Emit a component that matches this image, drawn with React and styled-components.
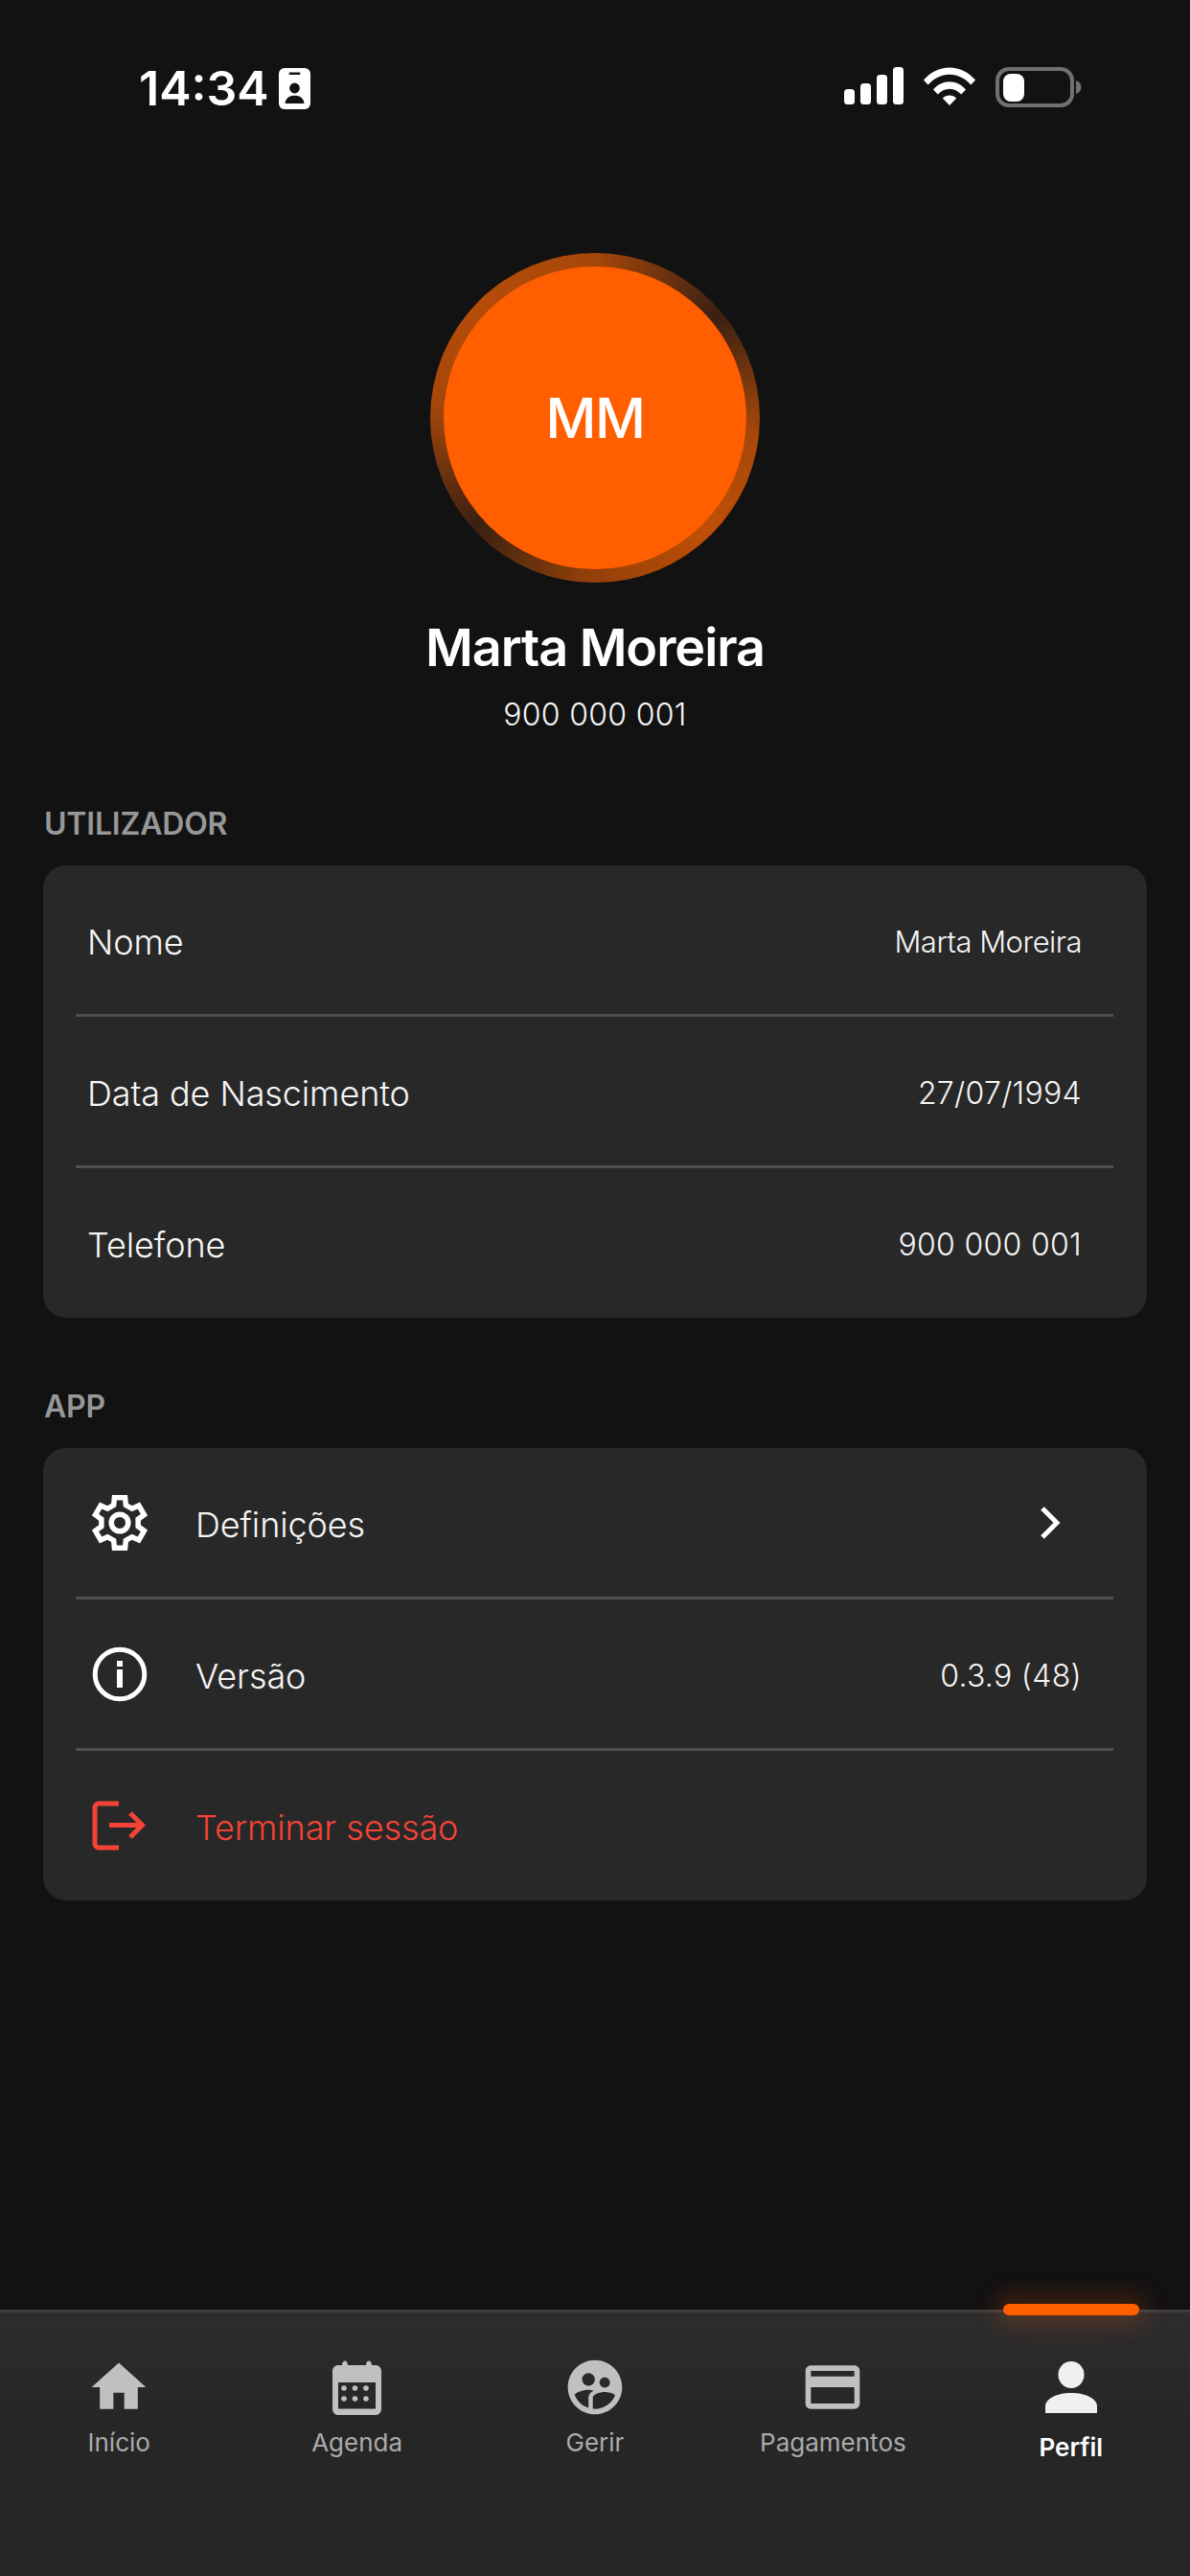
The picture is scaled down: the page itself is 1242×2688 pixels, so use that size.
import React from 'react';
import styled, { createGlobalStyle } from 'styled-components';
import { MdHome, MdSupervisedUserCircle, MdCreditCard } from 'react-icons/md';

const GlobalStyle = createGlobalStyle`
  html, body {
    margin: 0;
    padding: 0;
    background: #121212;
  }
  * {
    box-sizing: border-box;
  }
`;

const Page = styled.div`
  width: 1242px;
  height: 2688px;
  display: flex;
  flex-direction: column;
  background: #121212;
  color: #fff;
  font-family: Inter, "Liberation Sans", sans-serif;
  overflow: hidden;
`;

const StatusBar = styled.div`
  height: 264px;
  padding: 70px 113px 0 145px;
  display: flex;
  align-items: flex-start;
  justify-content: space-between;
`;

const StatusLeft = styled.div`
  display: flex;
  align-items: center;
  gap: 10px;
  height: 44px;
`;

const Clock = styled.span`
  font-size: 50px;
  font-weight: 600;
  line-height: 44px;
`;

const StatusRight = styled.div`
  display: flex;
  align-items: flex-start;
  gap: 21px;
`;

const Profile = styled.div`
  display: flex;
  flex-direction: column;
  align-items: center;
`;

const AvatarRing = styled.div`
  width: 344px;
  height: 344px;
  padding: 14px;
  border-radius: 50%;
  background: conic-gradient(#a5470a 0deg, #3a2012 50deg, #a5470a 95deg, #c04f06 135deg, #8e3e0a 185deg, #3a2012 228deg, #a5470a 275deg, #b54c08 315deg, #a5470a 360deg);
`;

const Avatar = styled.div`
  width: 100%;
  height: 100%;
  border-radius: 50%;
  background: #ff5f00;
  display: flex;
  align-items: center;
  justify-content: center;
  font-size: 58px;
  font-weight: 500;
  letter-spacing: -1.5px;
`;

const Name = styled.div`
  margin-top: 36px;
  font-size: 54px;
  line-height: 64px;
  font-weight: 600;
  letter-spacing: -1.1px;
`;

const Phone = styled.div`
  margin-top: 18px;
  font-size: 32px;
  line-height: 40px;
  font-weight: 300;
  letter-spacing: 0.3px;
  color: #f5f5f5;
`;

const Section = styled.section`
  padding: 0 45px;
  margin-top: ${(p) => p.$top}px;
`;

const SectionTitle = styled.h2`
  margin: 0 0 25px 1px;
  font-size: 32px;
  line-height: 36px;
  font-weight: 600;
  letter-spacing: -0.2px;
  color: #979797;
`;

const Card = styled.div`
  background: #282828;
  border-radius: 24px;
  padding-bottom: 1px;
`;

const Row = styled.div`
  height: 155px;
  padding: 0 68px 0 ${(p) => (p.$icon ? 51 : 46)}px;
  display: flex;
  align-items: center;
`;

const RowIcon = styled.span`
  width: 58px;
  margin-right: 50px;
  display: flex;
  align-items: center;
  justify-content: center;
  color: ${(p) => p.$color || '#fff'};
`;

const Label = styled.span`
  flex: 1;
  padding-top: 4px;
  font-size: 36px;
  font-weight: 300;
  letter-spacing: -0.1px;
  color: ${(p) => p.$color || '#f5f5f5'};
`;

const Value = styled.span`
  padding-top: 3px;
  font-size: ${(p) => (p.$tight ? 31 : 32)}px;
  font-weight: 300;
  letter-spacing: ${(p) => (p.$tight ? -0.5 : 0.3)}px;
  color: #f5f5f5;
`;

const ChevronSlot = styled.span`
  display: flex;
  margin-right: 21px;
`;

const Divider = styled.div`
  height: 3px;
  margin: 0 35px 0 34px;
  background: #4f4f4f;
`;

const TabBar = styled.nav`
  position: relative;
  margin-top: auto;
  height: 278px;
  border-top: 3px solid #3f3f3f;
  background: linear-gradient(#2d2d2d, #262626 40%);
  display: grid;
  grid-template-columns: repeat(5, 1fr);
  padding-top: 44px;
`;

const Indicator = styled.div`
  position: absolute;
  top: -9px;
  left: 1047px;
  width: 142px;
  height: 12px;
  border-radius: 6px;
  background: #ff5f00;
  box-shadow: 0 0 26px 8px rgba(255, 95, 0, 0.22);
`;

const Tab = styled.div`
  display: flex;
  flex-direction: column;
  align-items: center;
  color: ${(p) => (p.$active ? '#f0f0f0' : '#c0c0c0')};
`;

const TabIcon = styled.div`
  width: 68px;
  height: 68px;
  display: flex;
  align-items: center;
  justify-content: center;
`;

const TabLabel = styled.span`
  margin-top: ${(p) => (p.$active ? 12 : 7)}px;
  font-size: 26px;
  line-height: 34px;
  font-weight: ${(p) => (p.$active ? 600 : 400)};
  color: ${(p) => (p.$active ? '#fff' : '#ababab')};
`;

const IdBadge = () => (
  <svg width="33" height="43" viewBox="0 0 33 43">
    <rect width="33" height="43" rx="6" fill="#fff" />
    <rect x="10.5" y="4.5" width="12" height="2.6" rx="1.3" fill="#121212" />
    <circle cx="16.5" cy="21" r="5.4" fill="#121212" />
    <path d="M6.5 37c.6-5.6 4.6-8.2 10-8.2s9.400 2.600 10 8.200z" fill="#121212" />
  </svg>
);

const Signal = () => (
  <svg width="62" height="40" viewBox="0 0 62 40">
    <rect x="0" y="23" width="11" height="16" rx="3.5" fill="#fff" />
    <rect x="17" y="17" width="11" height="22" rx="3.5" fill="#fff" />
    <rect x="34" y="8" width="11" height="31" rx="3.5" fill="#fff" />
    <rect x="51" y="0" width="11" height="39" rx="3.5" fill="#fff" />
  </svg>
);

const Wifi = () => (
  <svg width="54" height="40" viewBox="0 0 54 40">
    <path d="M0 13.5C7 5.5 16.5 0.5 27 0.5s20 5 27 13l-4.6 5C43.5 12 35.8 7.800 27 7.800S10.500 12 4.600 18.500z" fill="#fff" />
    <path d="M10 23.500C14.400 18.400 20.400 15.300 27 15.300s12.600 3.100 17 8.200l-4.800 5C36 24.900 31.800 22.700 27 22.700s-9 2.200-12.200 5.800z" fill="#fff" />
    <path d="M19.800 32.500C21.700 30.500 24.200 29.400 27 29.400s5.300 1.100 7.200 3.100L27 40z" fill="#fff" />
  </svg>
);

const Battery = () => (
  <svg width="90" height="42" viewBox="0 0 90 42">
    <rect x="2" y="2" width="78" height="38" rx="12" fill="none" stroke="#707070" strokeWidth="4" />
    <rect x="8" y="7" width="22" height="29" rx="8" fill="#fff" />
    <path d="M84 14c3.500 1 5.500 3.700 5.500 7s-2 6-5.500 7z" fill="#707070" />
  </svg>
);

// six teeth, one pointing straight up
const gearPoints = () => {
  const pts = [];
  for (let i = 0; i < 6; i++) {
    const a = i * 60 - 90;
    [[-19, 19.5], [-12, 26.8], [12, 26.8], [19, 19.5]].forEach(([off, r]) => {
      const t = ((a + off) * Math.PI) / 180;
      pts.push(`${(29 + r * Math.cos(t)).toFixed(2)},${(30 + r * Math.sin(t)).toFixed(2)}`);
    });
  }
  return pts.join(' ');
};

const GearIcon = () => (
  <svg width="58" height="60" viewBox="0 0 58 60" fill="none" stroke="currentColor" strokeWidth="5.500" strokeLinejoin="miter">
    <polygon points={gearPoints()} />
    <circle cx="29" cy="30" r="8.800" strokeWidth="5.500" />
  </svg>
);

const InfoIcon = () => (
  <svg width="58" height="58" viewBox="0 0 58 58" fill="none">
    <circle cx="29" cy="29" r="25.800" stroke="currentColor" strokeWidth="5" />
    <rect x="26" y="15" width="6" height="6" fill="currentColor" />
    <rect x="26" y="24" width="6" height="19" fill="currentColor" />
  </svg>
);

const LogoutIcon = () => (
  <svg width="58" height="52" viewBox="0 0 58 52" fill="none" stroke="currentColor" strokeWidth="5">
    <path d="M28 3H7a4 4 0 0 0-4 4v38a4 4 0 0 0 4 4h21" />
    <path d="M18 25.500h33" />
    <path d="M40 13l12.500 12.500L40 38" />
  </svg>
);

const Chevron = () => (
  <svg width="24" height="36" viewBox="0 0 24 36" fill="none" stroke="#fff" strokeWidth="5">
    <path d="M4 3l15 15L4 33" />
  </svg>
);

const CalendarIcon = () => (
  <svg width="51" height="57" viewBox="0 0 51 57" fill="currentColor">
    <path fillRule="evenodd" d="M6 5h4c0-6 6-6 6 0h19c0-6 6-6 6 0h4c3.300 0 6 2.700 6 6v40c0 3.300-2.700 6-6 6H6c-3.300 0-6-2.700-6-6V11c0-3.300 2.700-6 6-6zm0 18v27.500h39V23z" />
    {[12, 23.500, 35].map((x) =>
      [29, 40].map((y) => <circle key={`${x}-${y}`} cx={x} cy={y} r="2.800" />)
    )}
  </svg>
);

const PersonIcon = () => (
  <svg width="54" height="54" viewBox="0 0 54 54" fill="currentColor">
    <ellipse cx="27" cy="14" rx="13.500" ry="14" />
    <path d="M0 54V47C0 39 12 33 27 33s27 6 27 14v7z" />
  </svg>
);

const tabs = [
  { label: 'Início', icon: <MdHome size={68} /> },
  { label: 'Agenda', icon: <CalendarIcon /> },
  { label: 'Gerir', icon: <MdSupervisedUserCircle size={68} /> },
  { label: 'Pagamentos', icon: <MdCreditCard size={68} /> },
  { label: 'Perfil', icon: <PersonIcon />, active: true },
];

export default function App() {
  return (
    <Page>
      <GlobalStyle />
      <StatusBar>
        <StatusLeft>
          <Clock>14:34</Clock>
          <IdBadge />
        </StatusLeft>
        <StatusRight>
          <Signal />
          <Wifi />
          <Battery />
        </StatusRight>
      </StatusBar>

      <Profile>
        <AvatarRing>
          <Avatar>MM</Avatar>
        </AvatarRing>
        <Name>Marta Moreira</Name>
        <Phone>900 000 001</Phone>
      </Profile>

      <Section $top={76}>
        <SectionTitle>UTILIZADOR</SectionTitle>
        <Card>
          <Row>
            <Label>Nome</Label>
            <Value $tight>Marta Moreira</Value>
          </Row>
          <Divider />
          <Row>
            <Label>Data de Nascimento</Label>
            <Value>27/07/1994</Value>
          </Row>
          <Divider />
          <Row>
            <Label>Telefone</Label>
            <Value>900 000 001</Value>
          </Row>
        </Card>
      </Section>

      <Section $top={75}>
        <SectionTitle>APP</SectionTitle>
        <Card>
          <Row $icon>
            <RowIcon><GearIcon /></RowIcon>
            <Label>Definições</Label>
            <ChevronSlot><Chevron /></ChevronSlot>
          </Row>
          <Divider />
          <Row $icon>
            <RowIcon><InfoIcon /></RowIcon>
            <Label>Versão</Label>
            <Value>0.3.9 (48)</Value>
          </Row>
          <Divider />
          <Row $icon>
            <RowIcon $color="#f44336"><LogoutIcon /></RowIcon>
            <Label $color="#f44336">Terminar sessão</Label>
          </Row>
        </Card>
      </Section>

      <TabBar>
        <Indicator />
        {tabs.map((tab) => (
          <Tab key={tab.label} $active={tab.active}>
            <TabIcon>{tab.icon}</TabIcon>
            <TabLabel $active={tab.active}>{tab.label}</TabLabel>
          </Tab>
        ))}
      </TabBar>
    </Page>
  );
}
